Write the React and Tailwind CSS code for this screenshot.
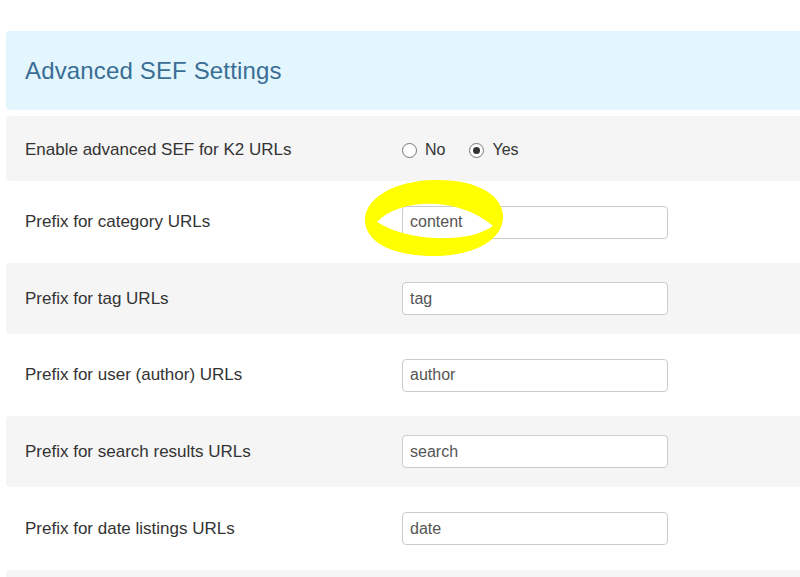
import React from 'react';

const fields = [
  { label: 'Prefix for category URLs', value: 'content', h: 'h-[82px]', gray: false },
  { label: 'Prefix for tag URLs', value: 'tag', h: 'h-[71px]', gray: true },
  { label: 'Prefix for user (author) URLs', value: 'author', h: 'h-[82px]', gray: false },
  { label: 'Prefix for search results URLs', value: 'search', h: 'h-[71px]', gray: true },
  { label: 'Prefix for date listings URLs', value: 'date', h: 'h-[83px]', gray: false },
];

function Radio({ checked, label }) {
  return (
    <label className="flex items-center">
      <span className="w-[15px] h-[15px] rounded-full border border-[#767676] bg-white flex items-center justify-center">
        {checked && <span className="w-[7px] h-[7px] rounded-full bg-[#333]" />}
      </span>
      <span className="ml-[8px] text-[16px]">{label}</span>
    </label>
  );
}

function Row({ label, gray, h, children, first }) {
  return (
    <div className={`${h} flex items-center pl-[19px] rounded-[4px] ${gray ? 'bg-[#f5f5f5]' : 'bg-white'} ${first ? 'pt-[3px]' : ''}`}>
      <div className="w-[377px] text-[17px]">{label}</div>
      <div>{children}</div>
    </div>
  );
}

export default function App() {
  return (
    <div
      className="relative w-[800px] h-[577px] overflow-hidden bg-white text-[16px] text-[#333]"
      style={{ fontFamily: '"Liberation Sans", Arial, sans-serif' }}
    >
      <div className="ml-[6px] w-[820px] pt-[31px]">
        <div className="h-[79px] bg-[#e3f5fd] rounded-[4px] flex items-center pl-[19px] mb-[6px]">
          <h2 className="text-[24px] text-[#3a6e95] font-normal pt-[1px] tracking-[0.15px]">Advanced SEF Settings</h2>
        </div>
        <Row label="Enable advanced SEF for K2 URLs" gray h="h-[65px]" first>
          <div className="flex items-center gap-[24px]">
            <Radio label="No" />
            <Radio label="Yes" checked />
          </div>
        </Row>
        {fields.map(f => (
          <Row key={f.label} label={f.label} gray={f.gray} h={f.h}>
            <input
              readOnly
              value={f.value}
              className="w-[266px] h-[33px] px-[7px] border border-[#ccc] rounded-[4px] bg-white text-[#555] text-[16px] outline-none"
              style={{ fontFamily: '"Liberation Sans", Arial, sans-serif' }}
            />
          </Row>
        ))}
        <div className="h-[20px] bg-[#f5f5f5] rounded-[4px]" />
      </div>

      {/* yellow highlighter annotation */}
      <svg className="absolute left-[360px] top-[176px]" width="150" height="86" viewBox="0 0 150 86">
        <path
          fillRule="evenodd"
          fill="#ffff00"
          d="M74 4 C118 3 144 20 143 42 C142 66 110 81 70 80 C28 79 5 64 5 44 C5 22 34 5 74 4 Z M17 46 C40 21 100 21 133 50 C110 67 50 67 17 46 Z"
        />
      </svg>
    </div>
  );
}
